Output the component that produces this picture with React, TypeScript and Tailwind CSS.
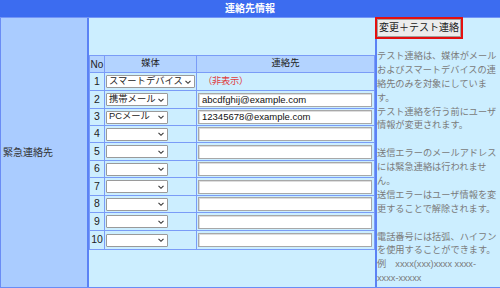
import React from "react";

const rows: { no: number; media: string; wide?: boolean; contact?: string; hidden?: boolean; h: string }[] = [
  { no: 1, media: "スマートデバイス", wide: true, hidden: true, h: "h-[18px]" },
  { no: 2, media: "携帯メール", contact: "abcdfghij@example.com", h: "h-[18px]" },
  { no: 3, media: "PCメール", contact: "12345678@example.com", h: "h-[17px]" },
  { no: 4, media: "", contact: "", h: "h-[17px]" },
  { no: 5, media: "", contact: "", h: "h-[18px]" },
  { no: 6, media: "", contact: "", h: "h-[17px]" },
  { no: 7, media: "", contact: "", h: "h-[18px]" },
  { no: 8, media: "", contact: "", h: "h-[17px]" },
  { no: 9, media: "", contact: "", h: "h-[18px]" },
  { no: 10, media: "", contact: "", h: "h-[18px]" },
];

const Chevron = () => (
  <svg width="8" height="6" viewBox="0 0 8 6" className="shrink-0">
    <path d="M1.5 1.8 L4 4.3 L6.5 1.8" fill="none" stroke="#333" strokeWidth="1.1" />
  </svg>
);

const noteLines = [
  "テスト連絡は、媒体がメール",
  "およびスマートデバイスの連",
  "絡先のみを対象にしていま",
  "す。",
  "テスト連絡を行う前にユーザ",
  "情報が変更されます。",
  "",
  "送信エラーのメールアドレス",
  "には緊急連絡は行われませ",
  "ん。",
  "送信エラーはユーザ情報を変",
  "更することで解除されます。",
  "",
  "電話番号には括弧、ハイフン",
  "を使用することができます。",
  "例　xxxx(xxx)xxxx xxxx-",
  "xxxx-xxxxx",
];

export default function App() {
  return (
    <div className="w-[500px] h-[288px] overflow-hidden bg-white font-['Liberation_Sans','Noto_Sans_CJK_JP',sans-serif]">
      <div className="h-[18px] bg-[#3c6cf0] border-b border-[#7395f6] flex items-center justify-center text-white font-bold text-[10px] leading-none">
        連絡先情報
      </div>
      <div className="flex h-[270px] border-l border-b border-[#6a8cf5]">
        <div className="w-[88px] bg-[#aaccff] border-r-2 border-[#5b82f5] flex items-center pl-[2px] text-[10px] text-[#333]">
          緊急連絡先
        </div>
        <div className="w-[286px] bg-[#cceeff] pt-[37px]">
          <div className="border border-[#7a9cf7] text-[9.3px] text-[#222]">
            <div className="flex h-[17px] bg-[#b3d3ff] border-b border-[#7a9cf7]">
              <div className="w-[15px] border-r border-[#7a9cf7] flex items-center justify-center text-[10px]">No</div>
              <div className="w-[92px] border-r border-[#7a9cf7] flex items-center justify-center">媒体</div>
              <div className="flex-1 flex items-center justify-center">連絡先</div>
            </div>
            {rows.map((r, i) => (
              <div
                key={r.no}
                className={`flex ${r.h} ${i < rows.length - 1 ? "border-b" : ""} border-[#7a9cf7]`}
              >
                <div className="w-[15px] border-r border-[#7a9cf7] flex items-center justify-center text-[10.5px]">
                  {r.no}
                </div>
                <div className="w-[92px] border-r border-[#7a9cf7] flex items-center pl-[1px]">
                  <div
                    className={`${r.wide ? "w-[89px]" : "w-[62px]"} h-[13px] bg-white border border-[#9a9a9a] rounded-[1px] flex items-center justify-between pl-[2px] pr-[2px] leading-none whitespace-nowrap`}
                  >
                    <span>{r.media}</span>
                    <Chevron />
                  </div>
                </div>
                <div className="flex-1 flex items-center pl-[1px] pr-[2px]">
                  {r.hidden ? (
                    <span className="text-[#e03c3c] pl-[5px] tracking-[-0.3px]">（非表示）</span>
                  ) : (
                    <div className="w-full h-[14px] bg-white border border-[#a8a8a8] shadow-[inset_1px_1px_0_#ddd] flex items-center pl-[3px] text-[9.5px] text-[#111] leading-none">
                      {r.contact}
                    </div>
                  )}
                </div>
              </div>
            ))}
          </div>
        </div>
        <div className="flex-1 bg-[#cceeff] border-l-2 border-[#5b82f5] flex flex-col">
          <div className="-ml-[2px] -mt-[1px] w-[88px] h-[22px] border-2 border-[#e41010] bg-white">
            <div className="w-full h-full bg-[#ececec] border border-[#a0a0a0] flex items-center justify-center text-[10px] text-[#222] leading-none whitespace-nowrap">
              変更＋テスト連絡
            </div>
          </div>
          <div className="mt-[11px] text-[9.2px] leading-[13.9px] text-[#7a7a7a] whitespace-nowrap">
            {noteLines.map((l, i) => (
              <div key={i} className="h-[13.9px]">
                {l}
              </div>
            ))}
          </div>
        </div>
      </div>
    </div>
  );
}
